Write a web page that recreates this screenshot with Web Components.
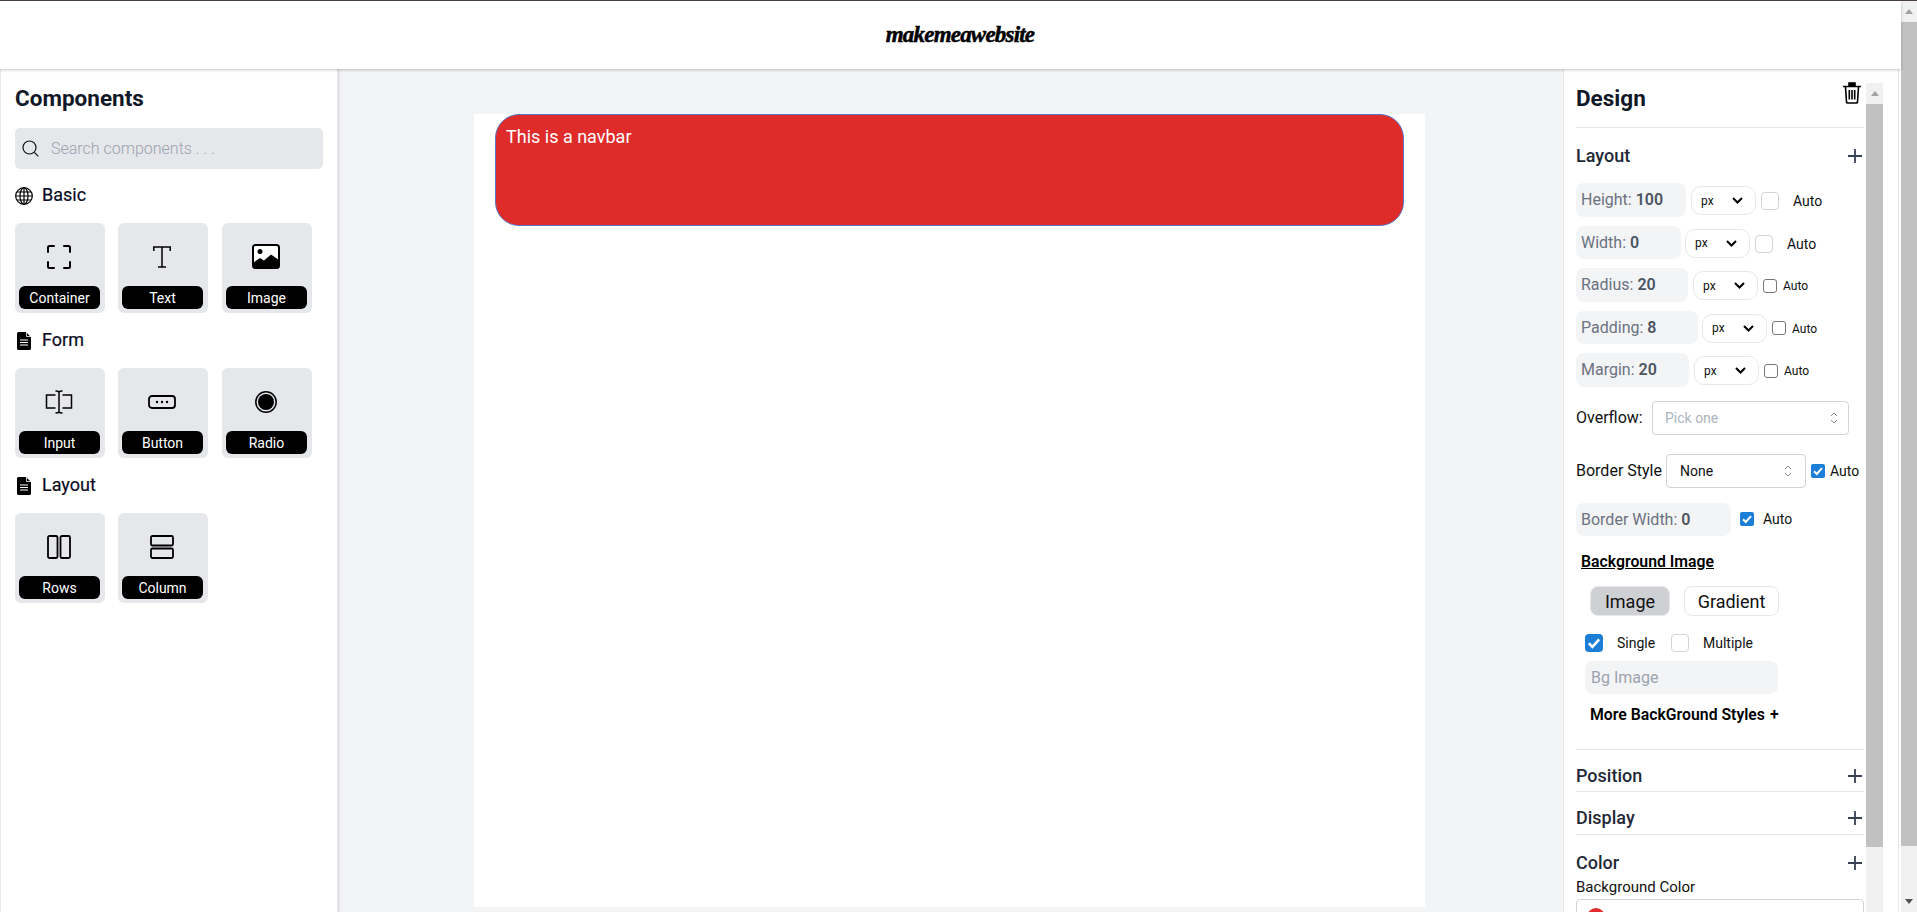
<!DOCTYPE html>
<html lang="en">
<head>
<meta charset="utf-8">
<title>makemeawebsite</title>
<style>
    html, body { margin: 0; height: 912px; overflow: hidden; background: #fff; font-family: Roboto, "Liberation Sans", sans-serif; }
</style>
</head>
<body>
<app-shell></app-shell>
<script>
// iconos de los componentes
const ICONOS = {
    container: `<svg width="24" height="24" viewBox="0 0 24 24" fill="none" stroke="#000" stroke-width="2" stroke-linecap="round" stroke-linejoin="round"><path d="M7 1H2.500A1.500 1.500 0 0 0 1 2.500V7M17 1h4.500A1.500 1.500 0 0 1 23 2.500V7M7 23H2.500A1.500 1.500 0 0 1 1 21.500V17M17 23h4.500a1.500 1.500 0 0 0 1.500-1.500V17"/></svg>`,
    text: `<svg width="18" height="22" viewBox="0 0 18 22" fill="none" stroke="#000" stroke-width="1.500"><path d="M.8 5V1h16.400v4M9 1v20M5 21h8"/></svg>`,
    image: `<svg width="28" height="25" viewBox="0 0 28 25"><rect x="1" y="1" width="26" height="23" rx="2.500" fill="#fff" stroke="#000" stroke-width="2"/><circle cx="8" cy="7.500" r="2.500"/><path d="M1 19l7-5 4 2.500 7-6 8 5.500v6a2 2 0 0 1-2 2H3a2 2 0 0 1-2-2z"/></svg>`,
    input: `<svg width="28" height="24" viewBox="0 0 28 24" fill="none" stroke="#000" stroke-width="1.500" stroke-linecap="round"><path d="M10 5H1.500v13H10M18 5h8.500v13H18M14 2v20M11 1c1.500 0 3 .5 3 1.500C14 1.500 15.500 1 17 1M11 23c1.500 0 3-.5 3-1.500 0 1 1.500 1.500 3 1.500"/></svg>`,
    button: `<svg width="28" height="14" viewBox="0 0 28 14"><rect x="1" y="1" width="26" height="12" rx="3" fill="none" stroke="#000" stroke-width="1.800"/><circle cx="9" cy="7" r="1.200"/><circle cx="14" cy="7" r="1.200"/><circle cx="19" cy="7" r="1.200"/></svg>`,
    radio: `<svg width="22" height="22" viewBox="0 0 22 22"><circle cx="11" cy="11" r="10.200" fill="none" stroke="#000" stroke-width="1.500"/><circle cx="11" cy="11" r="8"/></svg>`,
    rows: `<svg width="24" height="24" viewBox="0 0 24 24" fill="none" stroke="#000" stroke-width="1.800"><rect x="1" y="1" width="9.500" height="22" rx="1.500"/><rect x="13.500" y="1" width="9.500" height="22" rx="1.500"/></svg>`,
    column: `<svg width="24" height="24" viewBox="0 0 24 24" fill="none" stroke="#000" stroke-width="1.800"><rect x="1" y="1" width="22" height="9.500" rx="1.500"/><rect x="1" y="13.500" width="22" height="9.500" rx="1.500"/></svg>`,
    globe: `<svg width="18" height="18" viewBox="0 0 18 18" fill="none" stroke="#000" stroke-width="1.200"><circle cx="9" cy="9" r="8.300"/><ellipse cx="9" cy="9" rx="4" ry="8.300"/><path d="M9 .7v16.600M.7 9h16.600M1.900 5h14.200M1.900 13h14.200"/></svg>`,
    doc: `<svg width="14" height="18" viewBox="0 0 14 18"><path d="M1.500 0H9l5 5v11.500a1.500 1.500 0 0 1-1.500 1.500h-11A1.500 1.500 0 0 1 0 16.500v-15A1.500 1.500 0 0 1 1.500 0z"/><path d="M9.500 0v4.500H14" fill="none" stroke="#fff" stroke-width=".8"/><path d="M3 8h8M3 10.500h8M3 13h8" stroke="#fff" stroke-width="1"/></svg>`
};

const PLUS = `<svg width="14" height="14" viewBox="0 0 14 14" stroke="#374151" stroke-width="1.800"><path d="M7 0v14M0 7h14"/></svg>`;
const UPDOWN = `<svg width="8" height="12" viewBox="0 0 8 12" fill="none" stroke="#868e96" stroke-width="1"><path d="M1 4l3-3 3 3M1 8l3 3 3-3"/></svg>`;
const CHEVRON = `<svg width="11" height="7" viewBox="0 0 11 7" fill="none" stroke="#000" stroke-width="2"><path d="M1 1l4.500 4.500L10 1"/></svg>`;

class AppShell extends HTMLElement {
    constructor() {
        super();
        this.attachShadow({mode: 'open'});
        this.shadowRoot.innerHTML = `
            <style>
                :host { display: flex; flex-direction: column; height: 912px; overflow: hidden; }
                .linea { height: 1px; background: #4a4044; flex: none; }
                .fila { display: flex; flex: 1; min-height: 0; }
                .pagina { flex: 1; min-width: 0; display: flex; flex-direction: column; }
                .cuerpo { flex: 1; display: flex; min-height: 0; position: relative; }
                fake-scroll { width: 16px; }
            </style>
            <div class="linea"></div>
            <div class="fila">
                <div class="pagina">
                    <top-header></top-header>
                    <div class="cuerpo">
                        <components-panel></components-panel>
                        <canvas-area></canvas-area>
                        <design-panel></design-panel>
                    </div>
                </div>
                <fake-scroll thumb-top="21" thumb-height="824" arrow-down></fake-scroll>
            </div>
        `;
    }
}

class TopHeader extends HTMLElement {
    constructor() {
        super();
        this.attachShadow({mode: 'open'});
        this.shadowRoot.innerHTML = `
            <style>
                :host { display: flex; align-items: center; justify-content: center; height: 68px; flex: none; background: #fff; position: relative; z-index: 1; box-shadow: 0 1px 3px rgba(0,0,0,.22); }
                .logo { font: italic 700 23px "Liberation Serif", serif; color: #000; letter-spacing: -.8px; -webkit-text-stroke: .5px #000; margin-left: 19px; }
            </style>
            <span class="logo">makemeawebsite</span>
        `;
    }
}

class CompCard extends HTMLElement {
    constructor() {
        super();
        this.attachShadow({mode: 'open'});
    }

    connectedCallback() {
        this.shadowRoot.innerHTML = `
            <style>
                :host { display: flex; flex-direction: column; align-items: center; width: 90px; height: 90px; background: #e5e7eb; border-radius: 6px; box-sizing: border-box; padding: 4px 5px 4px 4px; }
                .icono { flex: 1; display: flex; align-items: center; justify-content: center; margin-left: -1px; }
                svg { display: block; }
                .etiqueta { width: 81px; height: 23px; background: #000; color: #fff; border-radius: 6px; font-size: 14px; line-height: 25px; text-align: center; }
            </style>
            <div class="icono">${ICONOS[this.getAttribute('icon')]}</div>
            <div class="etiqueta"><slot></slot></div>
        `;
    }
}

class SectionTitle extends HTMLElement {
    constructor() {
        super();
        this.attachShadow({mode: 'open'});
    }

    connectedCallback() {
        const icono = this.getAttribute('icon');
        this.shadowRoot.innerHTML = `
            <style>
                :host { display: flex; align-items: center; height: 18px; font-size: 18px; font-weight: 400; color: #0b0b24; }
                .caja { width: 18px; margin-right: 9px; display: flex; justify-content: center; }
                .txt { position: relative; top: -2px; -webkit-text-stroke: .2px #0b0b24; }
                svg { display: block; }
            </style>
            <span class="caja">${ICONOS[icono]}</span><span class="txt"><slot></slot></span>
        `;
    }
}

class ComponentsPanel extends HTMLElement {
    constructor() {
        super();
        this.attachShadow({mode: 'open'});
        this.shadowRoot.innerHTML = `
            <style>
                :host { display: block; width: 338px; flex: none; box-sizing: border-box; background: #fff; border-left: 1px solid #e5e7eb; border-right: 1px solid #e5e7eb; padding: 0 0 0 14px; }
                h2 { margin: 0; padding-top: 16px; box-sizing: border-box; font-size: 22.500px; line-height: 26px; font-weight: 700; color: #111827; height: 59px; }
                .buscar { width: 308px; height: 41px; box-sizing: border-box; background: #e5e7eb; border-radius: 5px; display: flex; align-items: center; padding-left: 7px; gap: 12px; }
                .buscar input { border: 0; outline: 0; background: transparent; font: 300 16px Roboto, sans-serif; width: 250px; padding: 0 0 1px; color: #111; }
                .buscar input::placeholder { color: #9ca3af; opacity: 1; }
                section-title { margin-top: 18px; }
                .rejilla { display: flex; gap: 13px; margin-top: 18px; margin-bottom: 19px; }
                .rejilla comp-card:nth-child(3) { margin-left: 1px; }
                section-title.pegado { margin-top: 0; }
            </style>
            <h2>Components</h2>
            <div class="buscar">
                <svg width="17" height="17" viewBox="0 0 17 17" fill="none" stroke="#111" stroke-width="1.200"><circle cx="7.500" cy="7.500" r="6.500"/><path d="M12.300 12.300l4 4"/></svg>
                <input placeholder="Search components . . .">
            </div>
            <section-title icon="globe">Basic</section-title>
            <div class="rejilla">
                <comp-card icon="container">Container</comp-card>
                <comp-card icon="text">Text</comp-card>
                <comp-card icon="image">Image</comp-card>
            </div>
            <section-title class="pegado" icon="doc">Form</section-title>
            <div class="rejilla">
                <comp-card icon="input">Input</comp-card>
                <comp-card icon="button">Button</comp-card>
                <comp-card icon="radio">Radio</comp-card>
            </div>
            <section-title class="pegado" icon="doc">Layout</section-title>
            <div class="rejilla">
                <comp-card icon="rows">Rows</comp-card>
                <comp-card icon="column">Column</comp-card>
            </div>
        `;
    }
}

class CanvasArea extends HTMLElement {
    constructor() {
        super();
        this.attachShadow({mode: 'open'});
        this.shadowRoot.innerHTML = `
            <style>
                :host { display: block; flex: 1; min-width: 0; background: #f3f4f6; padding: 45px 0 0 136px; box-shadow: inset 3px 0 3px -2px rgba(0,0,0,.12); }
                .hoja { width: 951px; height: 793px; background: #fff; padding: 0 0 0 21px; box-sizing: border-box; }
                .navbar { width: 909px; height: 112px; box-sizing: border-box; background: #df2c2b; border: 1px solid #5b78c8; border-radius: 24px; padding: 11px 10px; color: #fff; font-size: 18px; line-height: 22px; }
            </style>
            <div class="hoja"><div class="navbar">This is a navbar</div></div>
        `;
    }
}

class PropRow extends HTMLElement {
    constructor() {
        super();
        this.attachShadow({mode: 'open'});
    }

    connectedCallback() {
        const grande = this.hasAttribute('big');
        this.shadowRoot.innerHTML = `
            <style>
                :host { display: flex; align-items: center; height: 33.5px; margin-bottom: 9px; }
                .campo { width: ${this.getAttribute('w')}px; height: 100%; box-sizing: border-box; background: #f3f4f6; border-radius: 8px; padding: 0 0 0 5px; display: flex; align-items: center; font-size: 16px; color: #6b7280; white-space: pre; }
                b { color: #4b5563; font-weight: 600; }
                .unidad { box-sizing: border-box; width: 65px; height: 29px; margin-left: ${this.getAttribute('gap') || 5}px; margin-top: 2px; background: #fff; border: 1px solid #e5e7eb; border-radius: 10px; font-size: 12px; padding: 0 12px 0 9px; color: #111; display: flex; align-items: center; justify-content: space-between; }
                svg { display: block; }
                .cb { box-sizing: border-box; background: #fff; margin: 2px 0 0 5px; }
                .cb.g { width: 18px; height: 18px; border: 1px solid #ced4da; border-radius: 4px; margin-top: 3px; }
                .cb.p { width: 14px; height: 14px; border: 1px solid #767676; border-radius: 3px; }
                .auto { margin: 3px 0 0 ${grande ? 14 : 6}px; font-size: ${grande ? 14 : 12}px; color: #111; }
            </style>
            <div class="campo">${this.getAttribute('label')}: <b>${this.getAttribute('value')}</b></div>
            <div class="unidad"><span>px</span>${CHEVRON}</div>
            <div class="cb ${grande ? 'g' : 'p'}"></div>
            <span class="auto">Auto</span>
        `;
    }
}

class CheckMark extends HTMLElement {
    constructor() {
        super();
        this.attachShadow({mode: 'open'});
    }

    connectedCallback() {
        const s = this.getAttribute('size') || 14;
        const marcado = this.hasAttribute('checked');
        this.shadowRoot.innerHTML = `
            <style>
                :host { display: block; width: ${s}px; height: ${s}px; flex: none; box-sizing: border-box; border-radius: ${s > 14 ? 4 : 2}px; background: ${marcado ? '#1c7ed6' : '#fff'}; border: ${marcado ? 0 : '1px solid #ced4da'}; }
                svg { display: block; width: 100%; height: 100%; }
            </style>
            ${marcado ? '<svg viewBox="0 0 14 14" fill="none" stroke="#fff" stroke-width="2"><path d="M3 7.200l2.800 2.800L11 4.200"/></svg>' : ''}
        `;
    }
}

class AccordionHead extends HTMLElement {
    constructor() {
        super();
        this.attachShadow({mode: 'open'});
        this.shadowRoot.innerHTML = `
            <style>
                :host { display: flex; justify-content: space-between; align-items: center; font-size: 18px; font-weight: 500; color: #1f2937; padding-right: 2px; }
                svg { display: block; }
                .mas { margin-top: 2px; }
            </style>
            <slot></slot><span class="mas">${PLUS}</span>
        `;
    }
}

class DesignPanel extends HTMLElement {
    constructor() {
        super();
        this.attachShadow({mode: 'open'});
        this.shadowRoot.innerHTML = `
            <style>
                :host { display: flex; width: 336px; margin-right: 2px; flex: none; box-sizing: border-box; background: #fff; border-left: 1px solid #e5e7eb; border-right: 1px solid #e5e7eb; height: 100%; padding: 0 15px 0 0; font-size: 14px; position: relative; }
                .contenido { width: 288px; margin-left: 12px; overflow: hidden; flex: none; }
                h2 { margin: 0; padding: 16px 0 0; height: 59px; box-sizing: border-box; font-size: 22.500px; line-height: 26px; font-weight: 700; color: #111827; border-bottom: 1px solid #e5e7eb; }
                .basura { position: absolute; left: 279px; top: 13px; }
                accordion-head { height: 18px; }
                .cab1 { margin-top: 18px; margin-bottom: 19px; }
                .fila { display: flex; align-items: center; }
                .mantine { box-sizing: border-box; height: 34px; border: 1px solid #ced4da; border-radius: 4px; display: flex; align-items: center; justify-content: space-between; background: #fff; font-size: 14px; }
                .lbl { font-size: 16px; color: #111; }
                .campo { height: 33.5px; box-sizing: border-box; background: #f3f4f6; border-radius: 8px; padding: 0 0 0 5px; display: flex; align-items: center; font-size: 16px; color: #6b7280; white-space: pre; }
                .campo b { color: #4b5563; font-weight: 600; }
                .titulo-bg { margin: 17px 0 0 5px; font-weight: 600; text-decoration: underline; font-size: 15.800px; line-height: 17px; color: #000; }
                .tabs { display: flex; gap: 14px; margin: 16px 0 0 14px; }
                .tab { box-sizing: border-box; height: 30px; border: 1px solid #e5e7eb; border-radius: 8px; font-size: 18px; display: flex; align-items: center; justify-content: center; color: #111; }
                .tab.on { background: #ced0d4; }
                .chk { display: flex; align-items: center; margin: 18px 0 0 9px; }
                .chk span { font-size: 14px; color: #111; }
                .bg { width: 193px; height: 33px; margin: 9px 0 0 9px; background: #f3f4f6; border-radius: 8px; box-sizing: border-box; padding-left: 6px; display: flex; align-items: center; font-size: 16px; color: #9ca3af; }
                .mas-bg { margin: 11px 0 0 14px; font-weight: 600; font-size: 15.800px; line-height: 19px; color: #000; white-space: pre; }
                .mas-bg span { margin-left: 5px; }
                hr { border: 0; border-top: 1px solid #e5e7eb; margin: 0; }
                .color-box { height: 40px; margin-top: 3px; border: 1px solid #ced4da; border-radius: 4px; box-sizing: border-box; padding: 8px 0 0 10px; }
                .punto { width: 18px; height: 18px; border-radius: 50%; background: #df2c2b; }
            </style>
            <div class="contenido">
                <h2>Design</h2>
                <accordion-head class="cab1">Layout</accordion-head>
                <prop-row big w="110" label="Height" value="100"></prop-row>
                <prop-row big w="105" gap="4" label="Width" value="0"></prop-row>
                <prop-row w="112" label="Radius" value="20"></prop-row>
                <prop-row w="122" gap="4" label="Padding" value="8"></prop-row>
                <prop-row w="113" label="Margin" value="20"></prop-row>
                <div class="fila" style="margin-top:14px">
                    <span class="lbl" style="width:76px">Overflow:</span>
                    <div class="mantine" style="width:197px;padding:0 10px 0 12px;color:#adb5bd"><span>Pick one</span>${UPDOWN}</div>
                </div>
                <div class="fila" style="margin-top:19px">
                    <span class="lbl" style="width:90px;white-space:nowrap">Border Style</span>
                    <div class="mantine" style="width:140px;padding:0 13px;color:#111"><span>None</span>${UPDOWN}</div>
                    <check-mark checked style="margin-left:5px"></check-mark>
                    <span style="margin-left:5px;color:#111">Auto</span>
                </div>
                <div class="fila" style="margin-top:15px">
                    <div class="campo" style="width:155px">Border Width: <b>0</b></div>
                    <check-mark checked style="margin-left:9px"></check-mark>
                    <span style="margin-left:9px;color:#111">Auto</span>
                </div>
                <div class="titulo-bg">Background Image</div>
                <div class="tabs">
                    <div class="tab on" style="width:80px">Image</div>
                    <div class="tab" style="width:95px">Gradient</div>
                </div>
                <div class="chk">
                    <check-mark checked size="18"></check-mark><span style="margin-left:14px;width:54px">Single</span>
                    <check-mark size="18"></check-mark><span style="margin-left:14px">Multiple</span>
                </div>
                <div class="bg">Bg Image</div>
                <div class="mas-bg">More BackGround Styles<span>+</span></div>
                <hr style="margin-top:25px">
                <accordion-head style="margin-top:16px;margin-bottom:5px">Position</accordion-head>
                <hr style="margin-top:7px">
                <accordion-head style="margin-top:16px;margin-bottom:5px">Display</accordion-head>
                <hr style="margin-top:8px">
                <accordion-head style="margin-top:18px">Color</accordion-head>
                <div style="margin-top:7px;font-size:15px;line-height:18px;color:#111">Background Color</div>
                <div class="color-box"><div class="punto"></div></div>
            </div>
            <svg class="basura" width="18" height="22" viewBox="0 0 18 22" fill="none" stroke="#000" stroke-width="1.600"><path d="M0 4.500h18M6.500 1.500h5M2.500 5l1 15a1.200 1.200 0 0 0 1.200 1h8.600a1.200 1.200 0 0 0 1.200-1l1-15M6.300 8v9.500M9 8v9.500M11.700 8v9.500"/><path d="M6 1h6v3H6z" fill="#000"/></svg>
            <fake-scroll style="width:17px;margin:14px 0 0 2px" thumb-top="21" thumb-height="743"></fake-scroll>
        `;
    }
}

class FakeScroll extends HTMLElement {
    constructor() {
        super();
        this.attachShadow({mode: 'open'});
    }

    connectedCallback() {
        const abajo = this.hasAttribute('arrow-down');
        this.shadowRoot.innerHTML = `
            <style>
                :host { display: flex; flex-direction: column; flex: none; background: #f1f1f1; overflow: hidden; }
                .flecha { height: ${this.getAttribute('thumb-top')}px; flex: none; display: flex; align-items: center; justify-content: center; }
                .flecha i { width: 0; height: 0; border-left: 4.500px solid transparent; border-right: 4.500px solid transparent; border-bottom: 5px solid #a3a3a3; }
                .barra { height: ${this.getAttribute('thumb-height')}px; flex: none; background: #c1c1c1; }
                .resto { flex: 1; }
                .abajo { height: 21px; flex: none; display: flex; align-items: center; justify-content: center; }
                .abajo i { width: 0; height: 0; border-left: 4.500px solid transparent; border-right: 4.500px solid transparent; border-top: 5px solid #505050; }
            </style>
            <div class="flecha"><i></i></div>
            <div class="barra"></div>
            <div class="resto"></div>
            ${abajo ? '<div class="abajo"><i></i></div>' : ''}
        `;
    }
}

customElements.define('fake-scroll', FakeScroll);
customElements.define('check-mark', CheckMark);
customElements.define('prop-row', PropRow);
customElements.define('accordion-head', AccordionHead);
customElements.define('comp-card', CompCard);
customElements.define('section-title', SectionTitle);
customElements.define('top-header', TopHeader);
customElements.define('components-panel', ComponentsPanel);
customElements.define('canvas-area', CanvasArea);
customElements.define('design-panel', DesignPanel);
customElements.define('app-shell', AppShell);
</script>
</body>
</html>
